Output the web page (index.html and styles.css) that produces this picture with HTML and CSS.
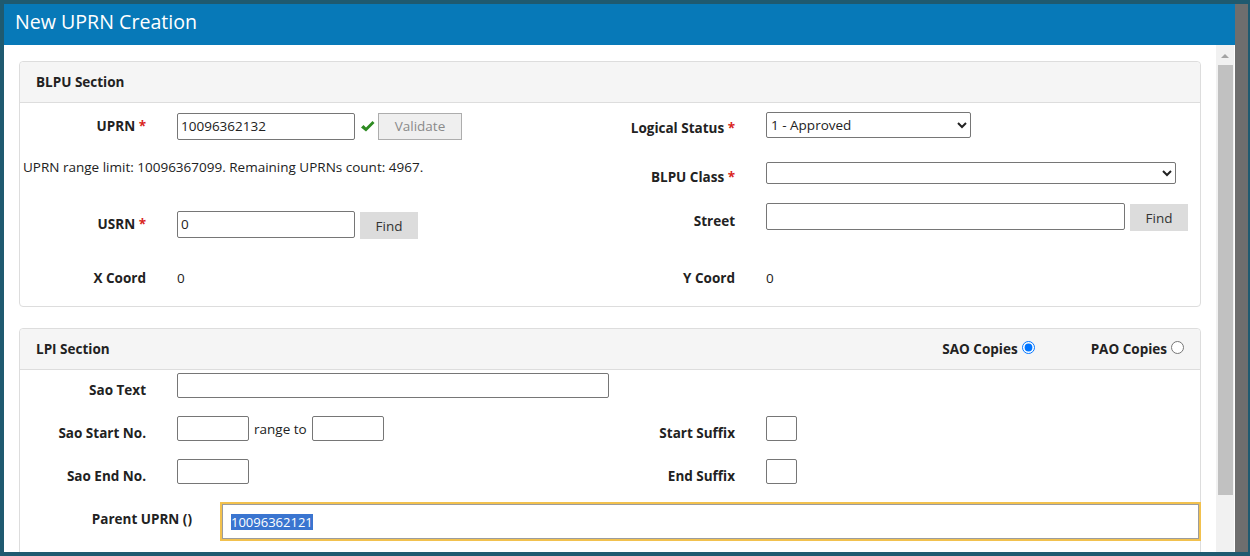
FILE: index.html
```html
<!DOCTYPE html>
<html lang="en">
<head>
    <meta charset="UTF-8">
    <meta name="viewport" content="width=device-width, initial-scale=1.0">
    <title>New UPRN Creation</title>
    <link rel="stylesheet" href="styles.css">
</head>
<body>
    <div class="screen">
        <div class="modal">
            <div class="modal-header">New UPRN Creation</div>
            <div class="modal-body">
                <div class="modal-content">

                    <div class="panel">
                        <div class="panel-heading">BLPU Section</div>
                        <div class="panel-body blpu">
                            <div class="col">
                                <div class="row row-uprn">
                                    <label class="lbl">UPRN <span class="req">*</span></label>
                                    <input type="text" class="field w-177" value="10096362132">
                                    <svg class="tick" width="15" height="13" viewBox="0 0 15 13">
                                        <path d="M1 7.5 L3.5 5 L6 7.5 L12.5 1 L14.5 3 L6 11.5 Z" fill="#2e8b22"/>
                                    </svg>
                                    <button class="btn-validate" disabled>Validate</button>
                                </div>
                                <p class="range-note">UPRN range limit: 10096367099. Remaining UPRNs count: 4967.</p>
                                <div class="row row-usrn">
                                    <label class="lbl">USRN <span class="req">*</span></label>
                                    <input type="text" class="field w-177" value="0">
                                    <button class="btn-find">Find</button>
                                </div>
                                <div class="row row-coord">
                                    <label class="lbl">X Coord</label>
                                    <span class="value">0</span>
                                </div>
                            </div>
                            <div class="col right">
                                <div class="row row-status">
                                    <label class="lbl">Logical Status <span class="req">*</span></label>
                                    <select class="select w-204">
                                        <option>1 - Approved</option>
                                    </select>
                                </div>
                                <div class="row row-class">
                                    <label class="lbl">BLPU Class <span class="req">*</span></label>
                                    <select class="select w-409">
                                        <option></option>
                                    </select>
                                </div>
                                <div class="row row-street">
                                    <label class="lbl">Street</label>
                                    <input type="text" class="field w-358">
                                    <button class="btn-find">Find</button>
                                </div>
                                <div class="row row-coord">
                                    <label class="lbl">Y Coord</label>
                                    <span class="value">0</span>
                                </div>
                            </div>
                        </div>
                    </div>

                    <div class="panel lpi">
                        <div class="panel-heading">
                            <span>LPI Section</span>
                            <span class="copies">
                                <label class="copy">SAO Copies <input type="radio" name="copies" checked></label>
                                <label class="copy">PAO Copies <input type="radio" name="copies"></label>
                            </span>
                        </div>
                        <div class="panel-body">
                            <div class="lpi-row">
                                <div class="half">
                                    <label class="lbl">Sao Text</label>
                                    <input type="text" class="field w-432">
                                </div>
                            </div>
                            <div class="lpi-row">
                                <div class="half">
                                    <label class="lbl">Sao Start No.</label>
                                    <input type="text" class="field w-71">
                                    <span class="range-to">range to</span>
                                    <input type="text" class="field w-71">
                                </div>
                                <div class="half">
                                    <label class="lbl">Start Suffix</label>
                                    <input type="text" class="field w-30">
                                </div>
                            </div>
                            <div class="lpi-row">
                                <div class="half">
                                    <label class="lbl">Sao End No.</label>
                                    <input type="text" class="field w-71">
                                </div>
                                <div class="half">
                                    <label class="lbl">End Suffix</label>
                                    <input type="text" class="field w-30">
                                </div>
                            </div>
                            <div class="lpi-row parent-row">
                                <label class="lbl lbl-parent">Parent UPRN ()</label>
                                <div class="field-focus"><span class="selected">10096362121</span></div>
                            </div>
                        </div>
                    </div>

                </div>
                <div class="scrollbar">
                    <div class="arrow"></div>
                    <div class="thumb"></div>
                </div>
            </div>
        </div>
        <div class="backdrop-edge"></div>
    </div>
</body>
</html>
```

FILE: styles.css
```css
* {
    box-sizing: border-box;
    margin: 0;
    padding: 0;
}

body {
    font-family: 'Open Sans', 'Noto Sans', sans-serif;
    font-size: 13.5px;
    color: #222;
    width: 1250px;
    height: 556px;
    overflow: hidden;
}

.screen {
    display: flex;
    height: 556px;
    background: #1f5a70;
    padding: 4px 2px 4px 4px;
}

.modal {
    flex: 1;
    display: flex;
    flex-direction: column;
    background: #fff;
    overflow: hidden;
}

.backdrop-edge {
    width: 13px;
    background: #6e6e6e;
}

.modal-header {
    height: 41px;
    background: #0779b8;
    color: #fff;
    font-size: 19.6px;
    line-height: 36px;
    padding-left: 11px;
}

.modal-body {
    flex: 1;
    display: flex;
    overflow: hidden;
}

.modal-content {
    flex: 1;
    padding: 16px 15px 0 15px;
}

.scrollbar {
    width: 18px;
    background: #f1f1f1;
    margin-right: 1px;
    display: flex;
    flex-direction: column;
    align-items: center;
}

.arrow {
    margin-top: 9px;
    width: 0;
    height: 0;
    border-left: 4px solid transparent;
    border-right: 4px solid transparent;
    border-bottom: 4px solid #a3a3a3;
}

.thumb {
    margin-top: 7px;
    width: 15px;
    height: 430px;
    background: #c1c1c1;
}

/* panels */
.panel {
    border: 1px solid #ddd;
    border-radius: 4px;
    margin-bottom: 21px;
}

.panel-heading {
    height: 41px;
    background: #f5f5f5;
    border-bottom: 1px solid #ddd;
    border-radius: 4px 4px 0 0;
    padding: 0 16px;
    font-weight: bold;
    display: flex;
    align-items: center;
    justify-content: space-between;
}

.blpu {
    display: flex;
    padding: 8px 0 18px 0;
}

.col {
    width: 589px;
}

.row {
    display: flex;
    align-items: center;
}

.lbl {
    width: 126px;
    text-align: right;
    font-weight: bold;
    margin-right: 31px;
    flex-shrink: 0;
}

.right .lbl {
    padding-top: 5px;
}

.req {
    color: #d9261c;
}

.field {
    height: 26px;
    border: 1px solid #767676;
    border-radius: 2px;
    font-family: inherit;
    font-size: 13.5px;
    padding: 0 3px;
    color: #222;
}

.w-177 { width: 178px; height: 27px; }
.w-358 { width: 359px; height: 27px; }
.w-432 { width: 433px; }
.w-71 { width: 72px; }
.w-30 { width: 31px; height: 26px; }

.select {
    height: 26px;
    border: 1px solid #767676;
    border-radius: 2px;
    font-family: inherit;
    font-size: 13.5px;
    background: #fff;
    color: #222;
}

.w-204 { width: 205px; }
.w-409 { width: 410px; height: 22px; }

.tick {
    margin-left: 5px;
}

.btn-validate {
    margin-left: 3px;
    width: 84px;
    height: 27px;
    border: 1px solid #adadad;
    background: #efefef;
    color: #8a8a8a;
    font-family: inherit;
    font-size: 13.5px;
}

.btn-find {
    margin-left: 5px;
    width: 58px;
    height: 27px;
    border: none;
    background: #dcdcdc;
    color: #333;
    font-family: inherit;
    font-size: 13.5px;
    margin-top: 3px;
}

.row-uprn {
    height: 30px;
}

.range-note {
    margin-top: 16px;
    margin-left: 3px;
    line-height: 20px;
}

.row-usrn {
    height: 30px;
    margin-top: 32px;
}

.row-coord {
    height: 20px;
    margin-top: 29px;
}

.right .row-coord .lbl {
    padding-top: 0;
}

.row-status {
    height: 28px;
}

.row-class {
    margin-top: 21px;
    height: 25px;
}

.row-class .lbl {
    padding-top: 9px;
}

.row-street {
    margin-top: 16px;
    height: 30px;
}

.row-street .lbl {
    padding-top: 10px;
}

.right .row-coord {
    margin-top: 37px;
}

.value {
    line-height: 20px;
}

/* LPI section */
.copies {
    display: flex;
    gap: 56px;
}

.copy {
    display: flex;
    align-items: center;
    gap: 4px;
}

.copy input {
    width: 13px;
    height: 13px;
    margin: 0;
    position: relative;
    top: -2px;
}

.lpi .panel-body {
    padding-top: 3px;
}

.lpi-row {
    display: flex;
    align-items: center;
    height: 25px;
    margin-bottom: 18px;
}

.lpi-row .lbl {
    padding-top: 9px;
}

.lpi-row .field {
    height: 25px;
}

.half {
    width: 589px;
    display: flex;
    align-items: center;
}

.range-to {
    margin: 0 5px;
}

.parent-row {
    height: 39px;
    margin-right: -1px;
}

.parent-row .lbl-parent {
    width: 172px;
    margin-right: 28px;
    padding-top: 0;
    margin-top: -6px;
}

.field-focus {
    flex: 1;
    height: 35px;
    margin: 2px;
    border: 1px solid #9c9c9c;
    outline: 2px solid #f2c14e;
    display: flex;
    align-items: center;
    padding-left: 8px;
    font-size: 13px;
}

.selected {
    background: #3a75d0;
    color: #fff;
    line-height: 16px;
}
```
